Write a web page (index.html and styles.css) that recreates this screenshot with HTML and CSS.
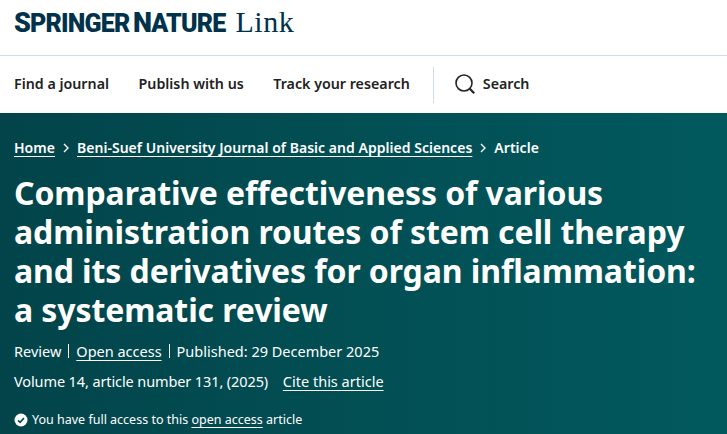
FILE: index.html

```html
<!DOCTYPE html>
<html lang="en">
<head>
  <meta charset="UTF-8" />
  <meta name="viewport" content="width=device-width, initial-scale=1" />
  <title>Comparative effectiveness of various administration routes</title>
  <link rel="stylesheet" href="styles.css">
</head>
<body>

  <header class="brand-bar">
    <a class="logo" href="#"><span class="logo-sn"><b>S</b>pringer <b>N</b>ature</span><span class="logo-link">Link</span></a>
  </header>

  <nav class="main-nav">
    <a href="#">Find a journal</a>
    <a href="#">Publish with us</a>
    <a href="#">Track your research</a>
    <a class="search" href="#">
      <svg width="20" height="20" viewBox="0 0 20 20" fill="none" stroke="#222" stroke-width="1.6">
        <circle cx="9" cy="9" r="8" />
        <path d="M14.8 14.8l4.4 4.4" stroke-width="2.2" />
      </svg>
      Search
    </a>
  </nav>

  <section class="hero">
    <ol class="crumbs">
      <li><a href="#">Home</a></li>
      <li class="sep"><svg width="6" height="10" viewBox="0 0 6 10" fill="none" stroke="#fff" stroke-width="1.4"><path d="M1 1l4 4-4 4" /></svg></li>
      <li><a href="#">Beni-Suef University Journal of Basic and Applied Sciences</a></li>
      <li class="sep"><svg width="6" height="10" viewBox="0 0 6 10" fill="none" stroke="#fff" stroke-width="1.4"><path d="M1 1l4 4-4 4" /></svg></li>
      <li>Article</li>
    </ol>

    <h1>Comparative effectiveness of various administration routes of stem cell therapy and its derivatives for organ inflammation: a systematic review</h1>

    <ul class="meta">
      <li>Review</li>
      <li><a href="#">Open access</a></li>
      <li>Published: 29 December 2025</li>
    </ul>

    <p class="volume"><span>Volume 14, article number 131, (2025)</span> <a href="#">Cite this article</a></p>

    <p class="access">
      <svg width="14" height="14" viewBox="0 0 14 14">
        <circle cx="7" cy="7" r="6.5" fill="#fff" />
        <path d="M4 7.3l2.1 2 3.8-4.2" fill="none" stroke="#024d52" stroke-width="1.6" />
      </svg>
      <span>You have full access to this <a href="#">open access</a> article</span>
    </p>
  </section>

</body>
</html>
```

FILE: styles.css

```css
body {
  font-family: "Noto Sans", sans-serif;
  margin: 0;
  background: #fff;
  color: #222;
  height: 434px;
  overflow: hidden;
}
a {
  color: inherit;
}

.brand-bar {
  height: 44px;
  border-bottom: 1px solid #d0dde8;
  padding: 0 0 11px 14px;
  display: flex;
  align-items: center;
}
.logo {
  display: flex;
  align-items: baseline;
  color: #01324b;
  text-decoration: none;
}
.logo-sn {
  font-family: Roboto, sans-serif;
  font-weight: 900;
  text-transform: uppercase;
  font-size: 25px;
  letter-spacing: -0.8px;
  word-spacing: -2px;
}
.logo-sn b {
  font-weight: 900;
  font-size: 27px;
}
.logo-link {
  font-family: "Liberation Serif", serif;
  font-size: 30px;
  margin-left: 10px;
  letter-spacing: 0.6px;
}

.main-nav {
  height: 57px;
  display: flex;
  align-items: center;
  padding-left: 14px;
  gap: 29.5px;
  font-size: 14.25px;
  font-weight: 600;
}
.main-nav a {
  text-decoration: none;
  padding-bottom: 2px;
}
.main-nav .search {
  display: flex;
  align-items: center;
  gap: 8px;
  height: 36px;
  box-sizing: border-box;
  margin-left: -6.5px;
  padding-left: 21px;
  border-left: 1px solid #d0dde8;
}

.hero {
  height: 321px;
  box-sizing: border-box;
  padding: 23px 14px 0;
  background: linear-gradient(90deg, #02444a 0%, #024f54 50%, #01595e 100%);
  color: #fff;
}

.crumbs {
  list-style: none;
  display: flex;
  align-items: center;
  gap: 8px;
  margin: 0;
  padding: 0;
  font-size: 14px;
  font-weight: 600;
  line-height: 24px;
  letter-spacing: 0.03px;
}
.crumbs a {
  text-underline-offset: 3px;
}
.sep {
  display: flex;
}

h1 {
  margin: 13px 0 0;
  font-size: 32px;
  font-weight: 700;
  line-height: 39px;
  letter-spacing: -0.1px;
}

.meta {
  list-style: none;
  display: flex;
  margin: 15px 0 0;
  padding: 0;
  font-size: 14.5px;
  line-height: 14px;
}
.meta li + li {
  margin-left: 7px;
  padding-left: 7px;
  border-left: 1px solid #fff;
}
.meta a,
.volume a,
.access a {
  text-underline-offset: 3px;
}

.volume {
  margin: 13px 0 0;
  font-size: 14.5px;
  line-height: 20px;
}
.volume span {
  letter-spacing: -0.11px;
}
.volume a {
  margin-left: 11px;
}

.access {
  display: flex;
  align-items: center;
  gap: 4px;
  margin: 19px 0 0;
  font-size: 12.5px;
  line-height: 20px;
}
```
